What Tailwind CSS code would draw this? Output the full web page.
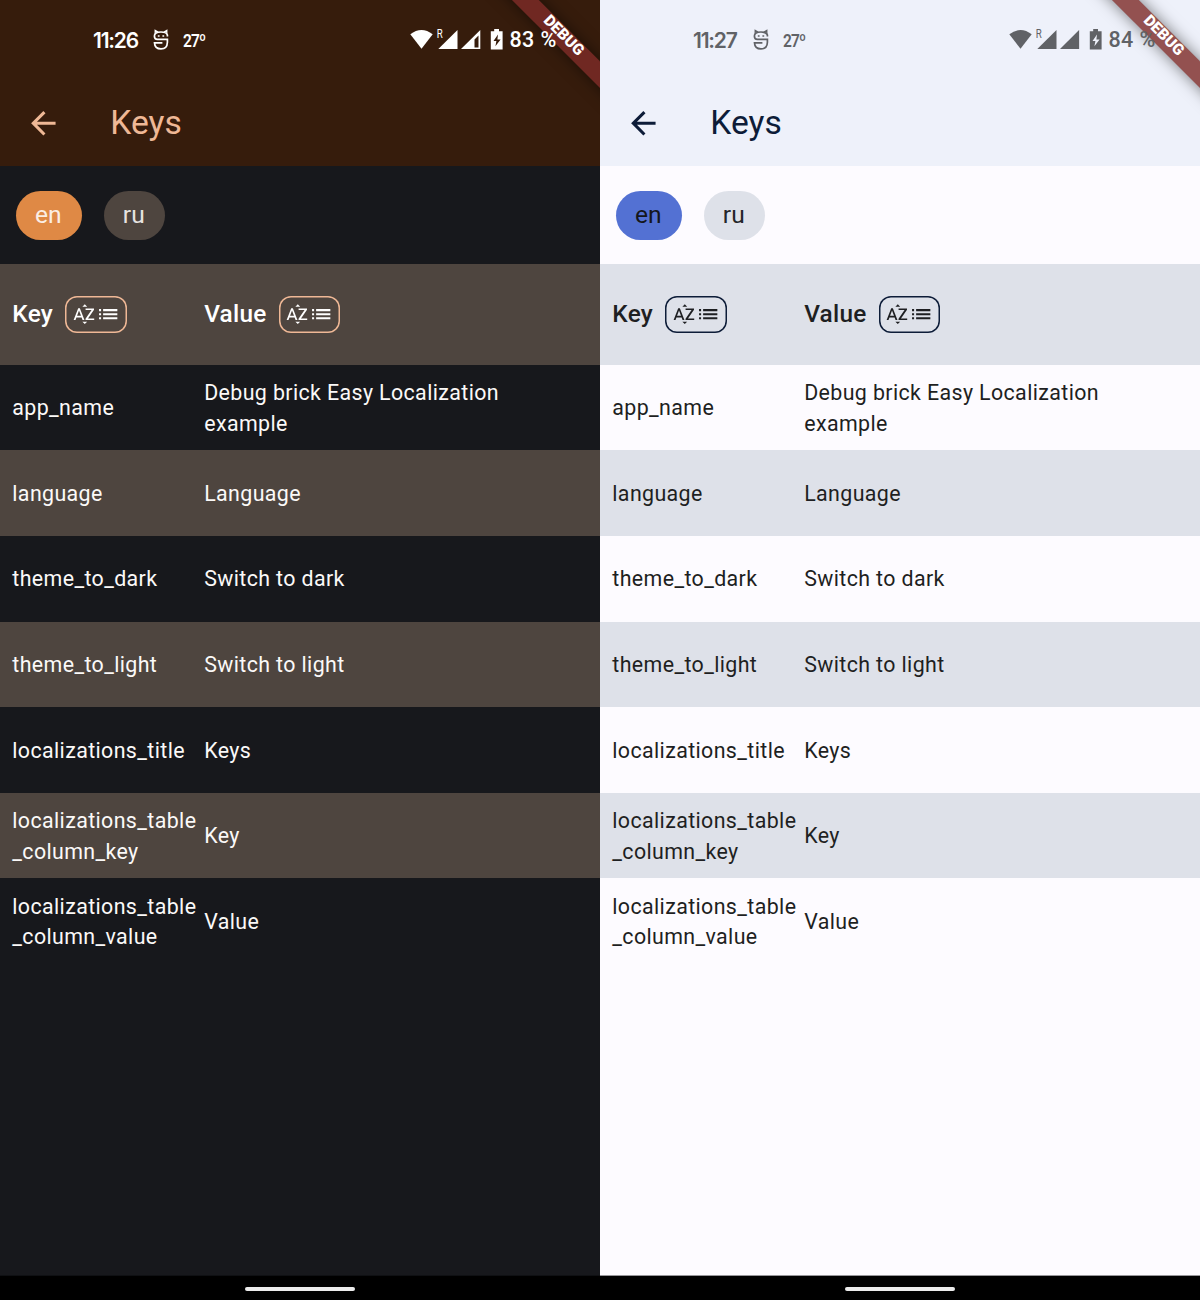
<!DOCTYPE html>
<html lang="en">
<head>
<meta charset="utf-8">
<title>Keys</title>
<script src="https://cdn.jsdelivr.net/npm/@tailwindcss/browser@4"></script>
</head>
<body class="w-[1200px] h-[1300px] overflow-hidden bg-black font-[Roboto,sans-serif]">
<main id="app" class="flex w-[1200px] h-[1300px]"></main>
<script>
const themes = [
  { time: '11:26', battery: '83 %', shift: 'ml-[204px]', partial: true,
    bar: 'bg-[#361c0c]', page: 'bg-[#17181c] text-[#fbf9f8]', status: 'text-white', hole: 'text-[#361c0c]',
    accent: 'text-[#efb896]', border: 'shadow-[inset_0_0_0_1.5px_#efb896]', stripe: 'bg-[#4e453f]', heading: 'text-white',
    on: 'bg-[#df8945] text-[#fbeee4]', off: 'bg-[#4e453f] text-[#e6e3e1]', ribbon: 'bg-[#702822]', nav: 'border-[#0f1013]' },
  { time: '11:27', battery: '84 %', shift: 'ml-[203px]', partial: false,
    bar: 'bg-[#eef1fa]', page: 'bg-[#fdfbff] text-[#1e1f22]', status: 'text-[#606266]', hole: 'text-[#eef1fa]',
    accent: 'text-[#0d1c38]', border: 'shadow-[inset_0_0_0_1.5px_#0d1c38]', stripe: 'bg-[#dee1e9]', heading: 'text-[#1e1f22]',
    on: 'bg-[#5371d3] text-[#14161c]', off: 'bg-[#dee1e9] text-[#25262a]', ribbon: 'bg-[#935150]', nav: 'border-[#97969a]' },
];
const rows = [
  ['app_name', 'Debug brick Easy Localization<br>example'],
  ['language', 'Language'],
  ['theme_to_dark', 'Switch to dark'],
  ['theme_to_light', 'Switch to light'],
  ['localizations_title', 'Keys'],
  ['localizations_table<br>_column_key', 'Key'],
  ['localizations_table<br>_column_value', 'Value'],
];
const sortButton = t => `
  <span class="flex h-[36.7px] w-[61.5px] shrink-0 items-center justify-center rounded-[12px] ${t.border}">
    <svg class="size-[24.4px] shrink-0" viewBox="0 0 24 24" fill="currentColor"><path d="M14.94 4.66h-4.72l2.36-2.36zm-4.69 14.71h4.66l-2.33 2.33zM6.1 6.27L1.6 17.73h1.84l.92-2.45h5.11l.92 2.45h1.84L7.74 6.27H6.1zm-1.13 7.37l1.94-5.18 1.94 5.18H4.97zm10.76 2.5h6.12v1.59h-8.53v-1.29l5.92-8.56h-5.88v-1.6h8.3v1.26l-5.93 8.6z"/></svg>
    <svg class="size-[24.4px] shrink-0" viewBox="0 0 24 24" fill="currentColor"><path d="M3 13h2v-2H3v2zm0 4h2v-2H3v2zm0-8h2V7H3v2zm4 4h14v-2H7v2zm0 4h14v-2H7v2zM7 7v2h14V7H7z"/></svg>
  </span>`;
const phone = t => `
<section class="relative flex h-[1300px] w-[600px] flex-col overflow-hidden ${t.page}">
  <header class="h-[165.9px] shrink-0 ${t.bar}">
    <div class="relative z-10 flex h-20 items-center pl-[93px] ${t.status}">
      <span class="w-[59.5px] whitespace-nowrap font-[Inter,sans-serif] text-[21px] font-semibold leading-none tracking-[-1.2px]">${t.time}</span>
      <svg class="w-[16px] h-[22px] shrink-0" viewBox="0 0 16 22" fill="none" stroke="currentColor" stroke-width="1.7">
        <path d="M14.4 7.6V6Q13.4 3 8 3Q1.4 3 1.4 7Q1.4 10.4 4.4 10.4H14.4V13.2Q14.2 19.9 8 19.9Q1.8 19.9 1.5 13.9H9.4"/>
        <path d="M2.2 4.8V1.4L5 3M13.8 4.8V1.4L11 3" stroke-width="1.3"/>
        <path d="M4.8 7h1.8M9.4 7h1.8" stroke-width="1.6"/>
      </svg>
      <span class="ml-[14.5px] w-[23px] origin-left scale-x-[0.84] whitespace-nowrap pt-[2px] text-[18.5px] font-semibold leading-none tracking-[-1px]">27º</span>
      <svg class="${t.shift} h-[24px] w-[96px] shrink-0" viewBox="0 0 96 24" fill="currentColor">
        <path d="M.3 6.3Q11.5-2.4 22.7 6.3L11.5 20.8Z"/>
        <text x="26.7" y="10.2" font-family="Roboto" font-size="12" textLength="6" lengthAdjust="spacingAndGlyphs">R</text>
        <path d="M47.5 2V21H28.3Z"/>
        ${t.partial ? '<path fill-rule="evenodd" d="M70.3 2V21H51Z M68.5 7.4L64.5 11.6V19.4H68.5Z"/>' : '<path d="M70.1 2V21H51Z"/>'}
        <path d="M84.2 1h4.8v2.2h3.6v18.3H80.8V3.2h3.4Z"/>
        <path class="${t.hole}" d="M88 6.4L83.5 13h2.9l-1 5.2L90.6 11.6h-3.2Z" />
      </svg>
      <span class="ml-[3.5px] whitespace-nowrap text-[21.5px] font-medium leading-none tracking-[0.4px]">${t.battery}</span>
    </div>
    <div class="flex h-[86px] items-center pl-[24.8px] ${t.accent}">
      <svg class="size-[36.7px]" viewBox="0 0 24 24" fill="currentColor"><path d="M20 11H7.83l5.59-5.59L12 4l-8 8 8 8 1.41-1.41L7.83 13H20v-2z"/></svg>
      <h1 class="ml-[48.8px] text-[33.6px] leading-none">Keys</h1>
    </div>
  </header>
  <nav class="flex h-[98.1px] shrink-0 items-center gap-[22px] px-4 pt-[0.6px] text-[24.6px] leading-none">
    <button class="flex h-[48.9px] w-[66px] items-center justify-center rounded-full pr-[1.4px] ${t.on}">en</button>
    <button class="flex h-[48.9px] w-[61px] items-center justify-center rounded-full pr-[1.4px] ${t.off}">ru</button>
  </nav>
  <div class="grid h-[100.8px] shrink-0 grid-cols-[191.9px_1fr] items-center pl-[12.3px] text-[24.4px] font-medium leading-none tracking-[0.23px] ${t.stripe} ${t.heading}">
    <div class="flex items-center"><span class="w-[53px]">Key</span>${sortButton(t)}</div>
    <div class="flex items-center"><span class="w-[74.4px]">Value</span>${sortButton(t)}</div>
  </div>
  ${rows.map(([k, v], i) => `
  <div class="grid h-[85.6px] shrink-0 grid-cols-[191.9px_1fr] items-center whitespace-nowrap pl-[12.3px] pt-[2px] text-[21.39px] leading-[30.56px] tracking-[0.38px] ${i % 2 ? t.stripe : ''}">
    <div>${k}</div><div>${v}</div>
  </div>`).join('')}
  <footer class="mt-auto flex h-[25px] shrink-0 items-center justify-center border-t ${t.nav} bg-black">
    <div class="mt-0.5 h-[4px] w-[110px] rounded-full bg-[#ececec]"></div>
  </footer>
  <div class="absolute left-[463px] top-[27.8px] h-[18.5px] w-[200px] rotate-45 shadow-[0_0_15px_rgba(0,0,0,0.5)] ${t.ribbon}"></div>
  <div class="absolute left-[463px] top-[27px] z-20 flex h-[18.3px] w-[200px] rotate-45 items-center justify-center text-[15.6px] font-black leading-none text-white">DEBUG</div>
</section>`;
document.getElementById('app').innerHTML = themes.map(phone).join('');
</script>
</body>
</html>
